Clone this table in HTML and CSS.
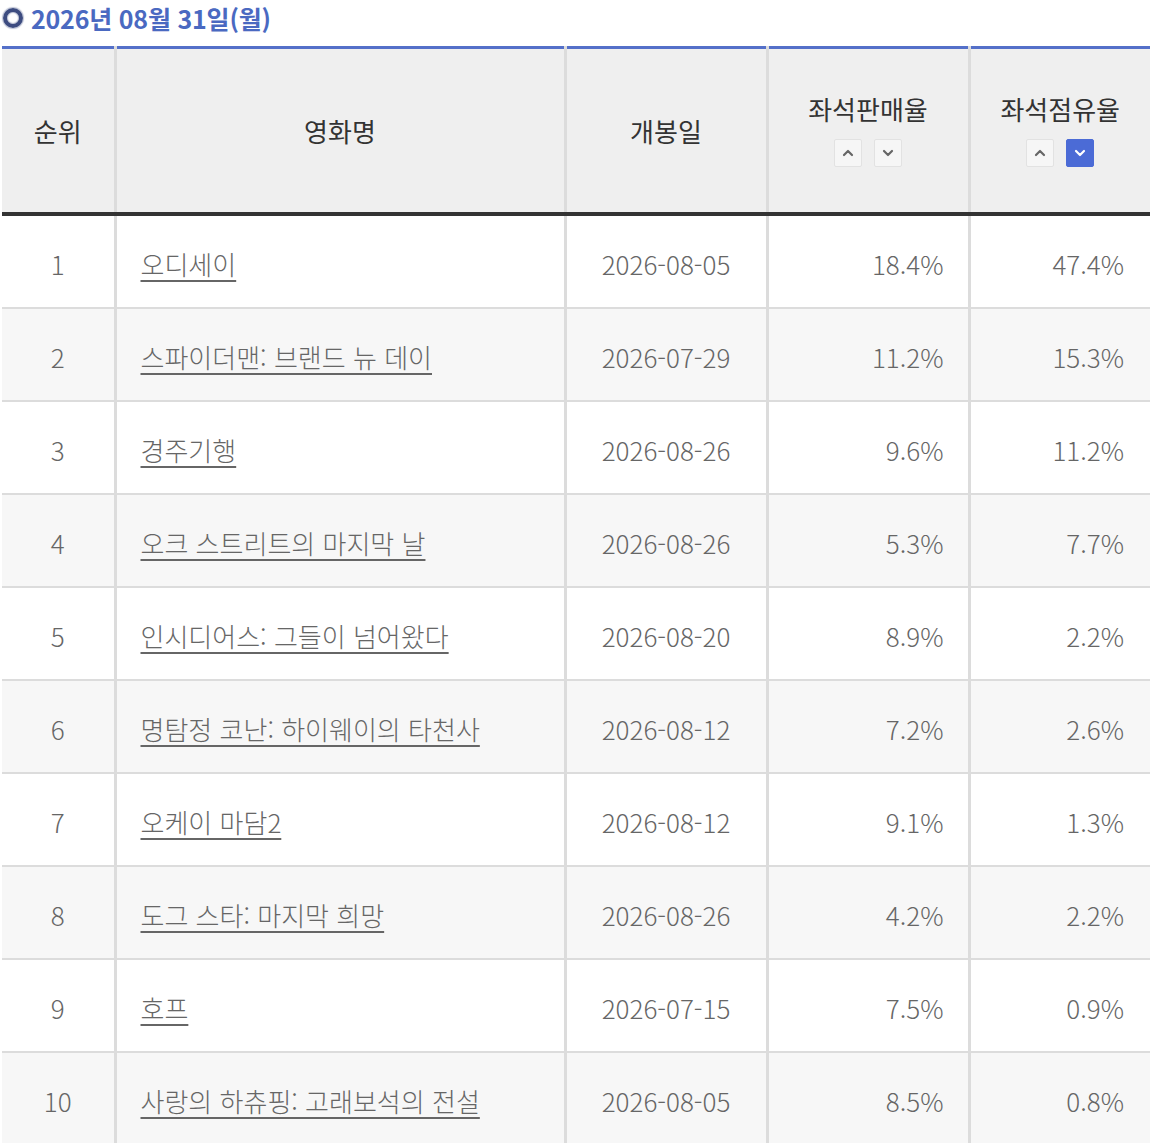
FILE: index.html
```html
<!DOCTYPE html>
<html lang="ko">
<head>
<meta charset="utf-8">
<link rel="stylesheet" href="styles.css">
</head>
<body>
<div class="wrap">
  <h2 class="date"><span class="ring"></span>2026년 08월 31일(월)</h2>
  <table class="rank">
    <colgroup>
      <col class="c-rank"><col class="c-title"><col class="c-date"><col class="c-sale"><col class="c-seat">
    </colgroup>
    <thead>
      <tr>
        <th>순위</th>
        <th>영화명</th>
        <th>개봉일</th>
        <th><div class="hl">좌석판매율</div>
          <div class="sort"><span class="btn"><svg viewBox="0 0 12 8"><path d="M2 6 L6 2 L10 6"/></svg></span><span class="btn"><svg viewBox="0 0 12 8"><path d="M2 2 L6 6 L10 2"/></svg></span></div></th>
        <th><div class="hl">좌석점유율</div>
          <div class="sort"><span class="btn"><svg viewBox="0 0 12 8"><path d="M2 6 L6 2 L10 6"/></svg></span><span class="btn on"><svg viewBox="0 0 12 8"><path d="M2 2 L6 6 L10 2"/></svg></span></div></th>
      </tr>
    </thead>
    <tbody>
      <tr><td class="n">1</td><td class="t"><a href="#">오디세이</a></td><td class="d">2026-08-05</td><td class="p">18.4%</td><td class="p">47.4%</td></tr>
      <tr><td class="n">2</td><td class="t"><a href="#">스파이더맨: 브랜드 뉴 데이</a></td><td class="d">2026-07-29</td><td class="p">11.2%</td><td class="p">15.3%</td></tr>
      <tr><td class="n">3</td><td class="t"><a href="#">경주기행</a></td><td class="d">2026-08-26</td><td class="p">9.6%</td><td class="p">11.2%</td></tr>
      <tr><td class="n">4</td><td class="t"><a href="#">오크 스트리트의 마지막 날</a></td><td class="d">2026-08-26</td><td class="p">5.3%</td><td class="p">7.7%</td></tr>
      <tr><td class="n">5</td><td class="t"><a href="#">인시디어스: 그들이 넘어왔다</a></td><td class="d">2026-08-20</td><td class="p">8.9%</td><td class="p">2.2%</td></tr>
      <tr><td class="n">6</td><td class="t"><a href="#">명탐정 코난: 하이웨이의 타천사</a></td><td class="d">2026-08-12</td><td class="p">7.2%</td><td class="p">2.6%</td></tr>
      <tr><td class="n">7</td><td class="t"><a href="#">오케이 마담2</a></td><td class="d">2026-08-12</td><td class="p">9.1%</td><td class="p">1.3%</td></tr>
      <tr><td class="n">8</td><td class="t"><a href="#">도그 스타: 마지막 희망</a></td><td class="d">2026-08-26</td><td class="p">4.2%</td><td class="p">2.2%</td></tr>
      <tr><td class="n">9</td><td class="t"><a href="#">호프</a></td><td class="d">2026-07-15</td><td class="p">7.5%</td><td class="p">0.9%</td></tr>
      <tr><td class="n">10</td><td class="t"><a href="#">사랑의 하츄핑: 고래보석의 전설</a></td><td class="d">2026-08-05</td><td class="p">8.5%</td><td class="p">0.8%</td></tr>
    </tbody>
  </table>
</div>
</body>
</html>
```
FILE: styles.css
```css
html, body {
  margin: 0;
  padding: 0;
  background: #fff;
}
body {
  font-family: "Noto Sans CJK KR", "Noto Sans", sans-serif;
  overflow: hidden;
}
.wrap {
  padding-left: 2px;
}
.date {
  margin: 0;
  height: 36px;
  display: flex;
  align-items: center;
  font-size: 25px;
  font-weight: 700;
  color: #4a69c1;
  letter-spacing: -0.2px;
  line-height: 1;
}
.ring {
  width: 12px;
  height: 12px;
  border: 4px solid #3d4c80;
  border-radius: 50%;
  margin: 0 8px 0 1px;
  flex: none;
  box-shadow: 0 0 1px 1px rgba(61, 76, 128, 0.35), inset 0 0 1px 1px rgba(61, 76, 128, 0.35);
}
.rank {
  margin-top: 10px;
  width: 1148px;
  border-collapse: collapse;
  table-layout: fixed;
  border-top: 3px solid #5470c9;
}
.c-rank { width: 113px; }
.c-title { width: 450px; }
.c-date { width: 202px; }
.c-sale { width: 202px; }
.c-seat { width: 181px; }
.rank th {
  background: #efefef;
  height: 163px;
  font-size: 26px;
  font-weight: 400;
  color: #333;
  border-left: 3px solid #dcdcdc;
  border-bottom: 4px solid #333;
  padding: 0;
  vertical-align: middle;
}
.rank th:first-child,
.rank td:first-child {
  border-left: none;
}
.hl {
  line-height: 30px;
  margin-top: 0;
}
.sort {
  display: flex;
  justify-content: center;
  gap: 12px;
  margin-top: 15px;
}
.btn {
  width: 28px;
  height: 28px;
  box-sizing: border-box;
  border: 1px solid #e2e2e2;
  background: #f6f6f6;
  border-radius: 2px;
  display: flex;
  align-items: center;
  justify-content: center;
}
.btn svg {
  width: 12px;
  height: 8px;
  fill: none;
  stroke: #666;
  stroke-width: 2.2;
  stroke-linecap: round;
  stroke-linejoin: round;
}
.btn.on {
  background: #4b6bd6;
  border-color: #4b6bd6;
}
.btn.on svg {
  stroke: #fff;
}
.rank td {
  height: 87px;
  padding: 4px 24px 0;
  font-size: 26px;
  font-weight: 300;
  color: #666;
  border-left: 3px solid #dcdcdc;
  border-top: 2px solid #dcdcdc;
  vertical-align: middle;
  white-space: nowrap;
}
.rank tbody tr:first-child td {
  border-top: none;
}
.rank tbody tr:nth-child(even) td {
  background: #f7f7f7;
}
.rank td.n {
  text-align: center;
  padding-left: 0;
  padding-right: 0;
}
.rank td.d {
  text-align: center;
  padding-left: 0;
  padding-right: 0;
}
.rank td.p {
  text-align: right;
}
.rank td.p:last-child {
  padding-right: 26px;
}
.rank td.t a {
  color: #666;
  text-decoration: underline;
  text-underline-offset: 5px;
  text-decoration-thickness: 2px;
}
```
